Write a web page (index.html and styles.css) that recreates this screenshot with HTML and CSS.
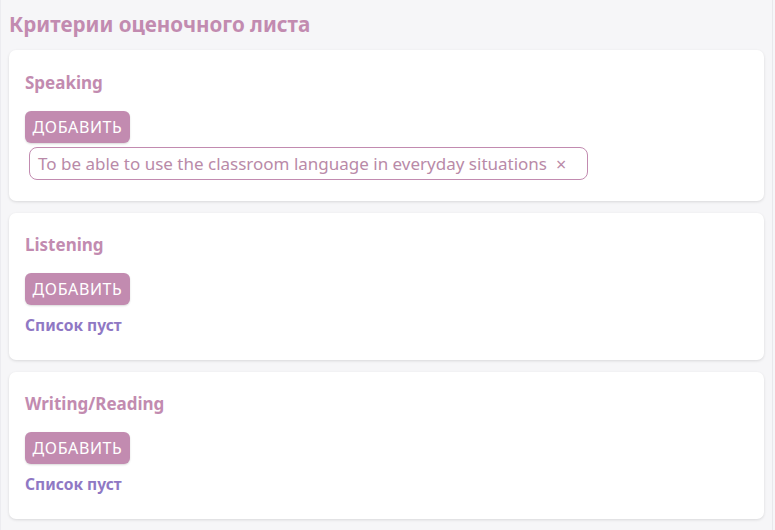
FILE: index.html
```html
<!DOCTYPE html>
<html lang="ru">
<head>
<meta charset="utf-8">
<link rel="stylesheet" href="styles.css">
</head>
<body>
<div class="page">
  <h1 class="title">Критерии оценочного листа</h1>
  <section class="card">
    <h2 class="card-title">Speaking</h2>
    <button class="btn">ДОБАВИТЬ</button>
    <div class="chips">
      <span class="chip">To be able to use the classroom language in everyday situations <span class="chip-x">×</span></span>
    </div>
  </section>
  <section class="card">
    <h2 class="card-title">Listening</h2>
    <button class="btn">ДОБАВИТЬ</button>
    <div class="empty">Список пуст</div>
  </section>
  <section class="card">
    <h2 class="card-title">Writing/Reading</h2>
    <button class="btn">ДОБАВИТЬ</button>
    <div class="empty">Список пуст</div>
  </section>
</div>
</body>
</html>
```
FILE: styles.css
```css
html, body {
  margin: 0;
  padding: 0;
  background: #f6f6f8;
}
body {
  font-family: "Noto Sans", "Open Sans", sans-serif;
}
.page {
  width: 773px;
  height: 530px;
  box-sizing: border-box;
  border-left: 1px solid #ececf0;
  border-right: 1px solid #e8e8ec;
  padding: 10px 8px 0 8px;
  display: flex;
  flex-direction: column;
  gap: 12px;
}
.title {
  margin: 0;
  font-size: 20.6px;
  line-height: 28px;
  font-weight: 700;
  color: #c28bb0;
}
.card {
  background: #fff;
  border-radius: 7px;
  box-shadow: 0 1px 3px rgba(0,0,0,0.12);
  padding: 22px 16px 21px 16px;
  display: flex;
  flex-direction: column;
  align-items: flex-start;
}
.card + .card {
  padding-top: 21px;
  padding-bottom: 25px;
}
.card-title {
  margin: 0 0 17px 0;
  font-size: 17px;
  line-height: 22px;
  font-weight: 700;
  color: #c28bb0;
}
.btn {
  font-family: "Noto Sans", "Open Sans", sans-serif;
  background: #c28bb0;
  color: #fff;
  border: none;
  border-radius: 6px;
  height: 32px;
  width: 105px;
  padding: 0;
  font-size: 16px;
  letter-spacing: 0.6px;
  box-shadow: 0 1px 2px rgba(0,0,0,0.15);
}
.chips {
  margin-top: 4px;
  padding-left: 4px;
}
.chip {
  display: inline-flex;
  align-items: center;
  gap: 9px;
  height: 33px;
  box-sizing: border-box;
  padding: 0 21px 0 8px;
  border: 1px solid #c28bb0;
  border-radius: 8px;
  font-size: 17px;
  color: #b98aa8;
}
.chip-x {
  font-size: 18px;
  color: #b98aa8;
}
.empty {
  margin-top: 10px;
  font-size: 15.6px;
  line-height: 20px;
  font-weight: 700;
  color: #8f78c4;
}
```
